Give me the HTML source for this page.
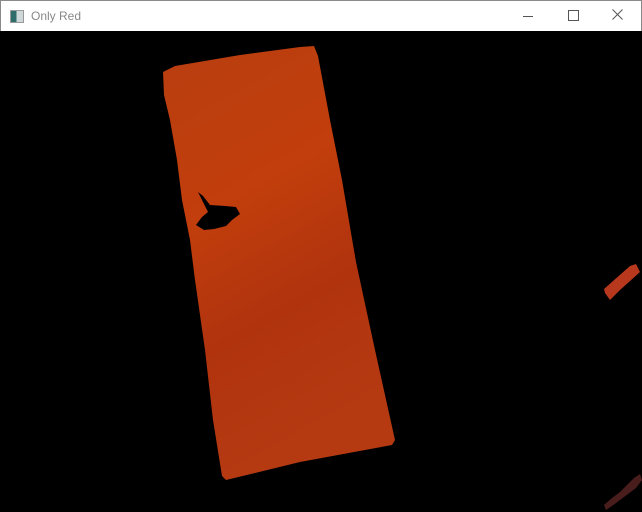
<!DOCTYPE html>
<html><head><meta charset="utf-8"><style>
html,body{margin:0;padding:0;width:642px;height:512px;overflow:hidden;background:#000;font-family:"Liberation Sans",sans-serif}
.bar{position:absolute;left:0;top:0;width:640px;height:30px;background:#fff;border:1px solid #8a8a8a;border-bottom:none}
.t{position:absolute;left:30px;top:8px;font-size:12px;color:#888}
.ic{position:absolute;left:9px;top:9px;width:12px;height:11px;border:1px solid #999;background:linear-gradient(90deg,#2d6e6a 0 45%,#cfd8d8 45%)}
.min{position:absolute;left:522px;top:15px;width:10px;height:1px;background:#555}
.max{position:absolute;left:567px;top:9px;width:9px;height:9px;border:1px solid #555}
svg{position:absolute;left:0;top:0}
</style></head><body>
<svg width="642" height="512">
<defs><linearGradient id="g" x1="0" y1="0" x2="0.3" y2="1">
<stop offset="0" stop-color="#b83e10"/><stop offset="0.4" stop-color="#c23e0c"/><stop offset="0.7" stop-color="#b0330e"/><stop offset="1" stop-color="#b53a12"/></linearGradient></defs>
<path d="M163,72 L175,66 L240,55 L300,47 L314,46 L318,56 L330,120 L342,180 L356,262 L375,350 L395,440 L392,445 L300,462 L226,480 L222,476 L213,420 L205,350 L195,280 L190,240 L182,200 L177,160 L170,120 L164,95 Z" fill="url(#g)"/>
<path d="M198,192 L203,196 L210,205 L225,206 L236,207 L240,214 L232,220 L226,226 L214,229 L204,230 L196,225 L202,217 L208,212 Z" fill="#000"/>
<path d="M605,293 L604,289 L630,266 L636,264 L640,272 L620,290 L610,300 Z" fill="#b8381e"/>
<g fill="#6a2a2a" opacity="0.7">
<path d="M604,505 L612,498 L620,492 L628,484 L634,478 L640,474 L642,480 L636,488 L628,494 L620,500 L612,506 L606,510 Z"/>
</g>
<g stroke="#555" stroke-width="1"><path d="M612.5,9.5 L622.5,19.5 M622.5,9.5 L612.5,19.5"/></g>
</svg>
<div class="bar"><div class="ic"></div><div class="t">Only Red</div><div class="min"></div><div class="max"></div></div>
<svg width="642" height="40" style="position:absolute;left:0;top:0"><path d="M612.5,9.5 L622.5,19.5 M622.5,9.5 L612.5,19.5" stroke="#555" stroke-width="1"/></svg>
</body></html>
